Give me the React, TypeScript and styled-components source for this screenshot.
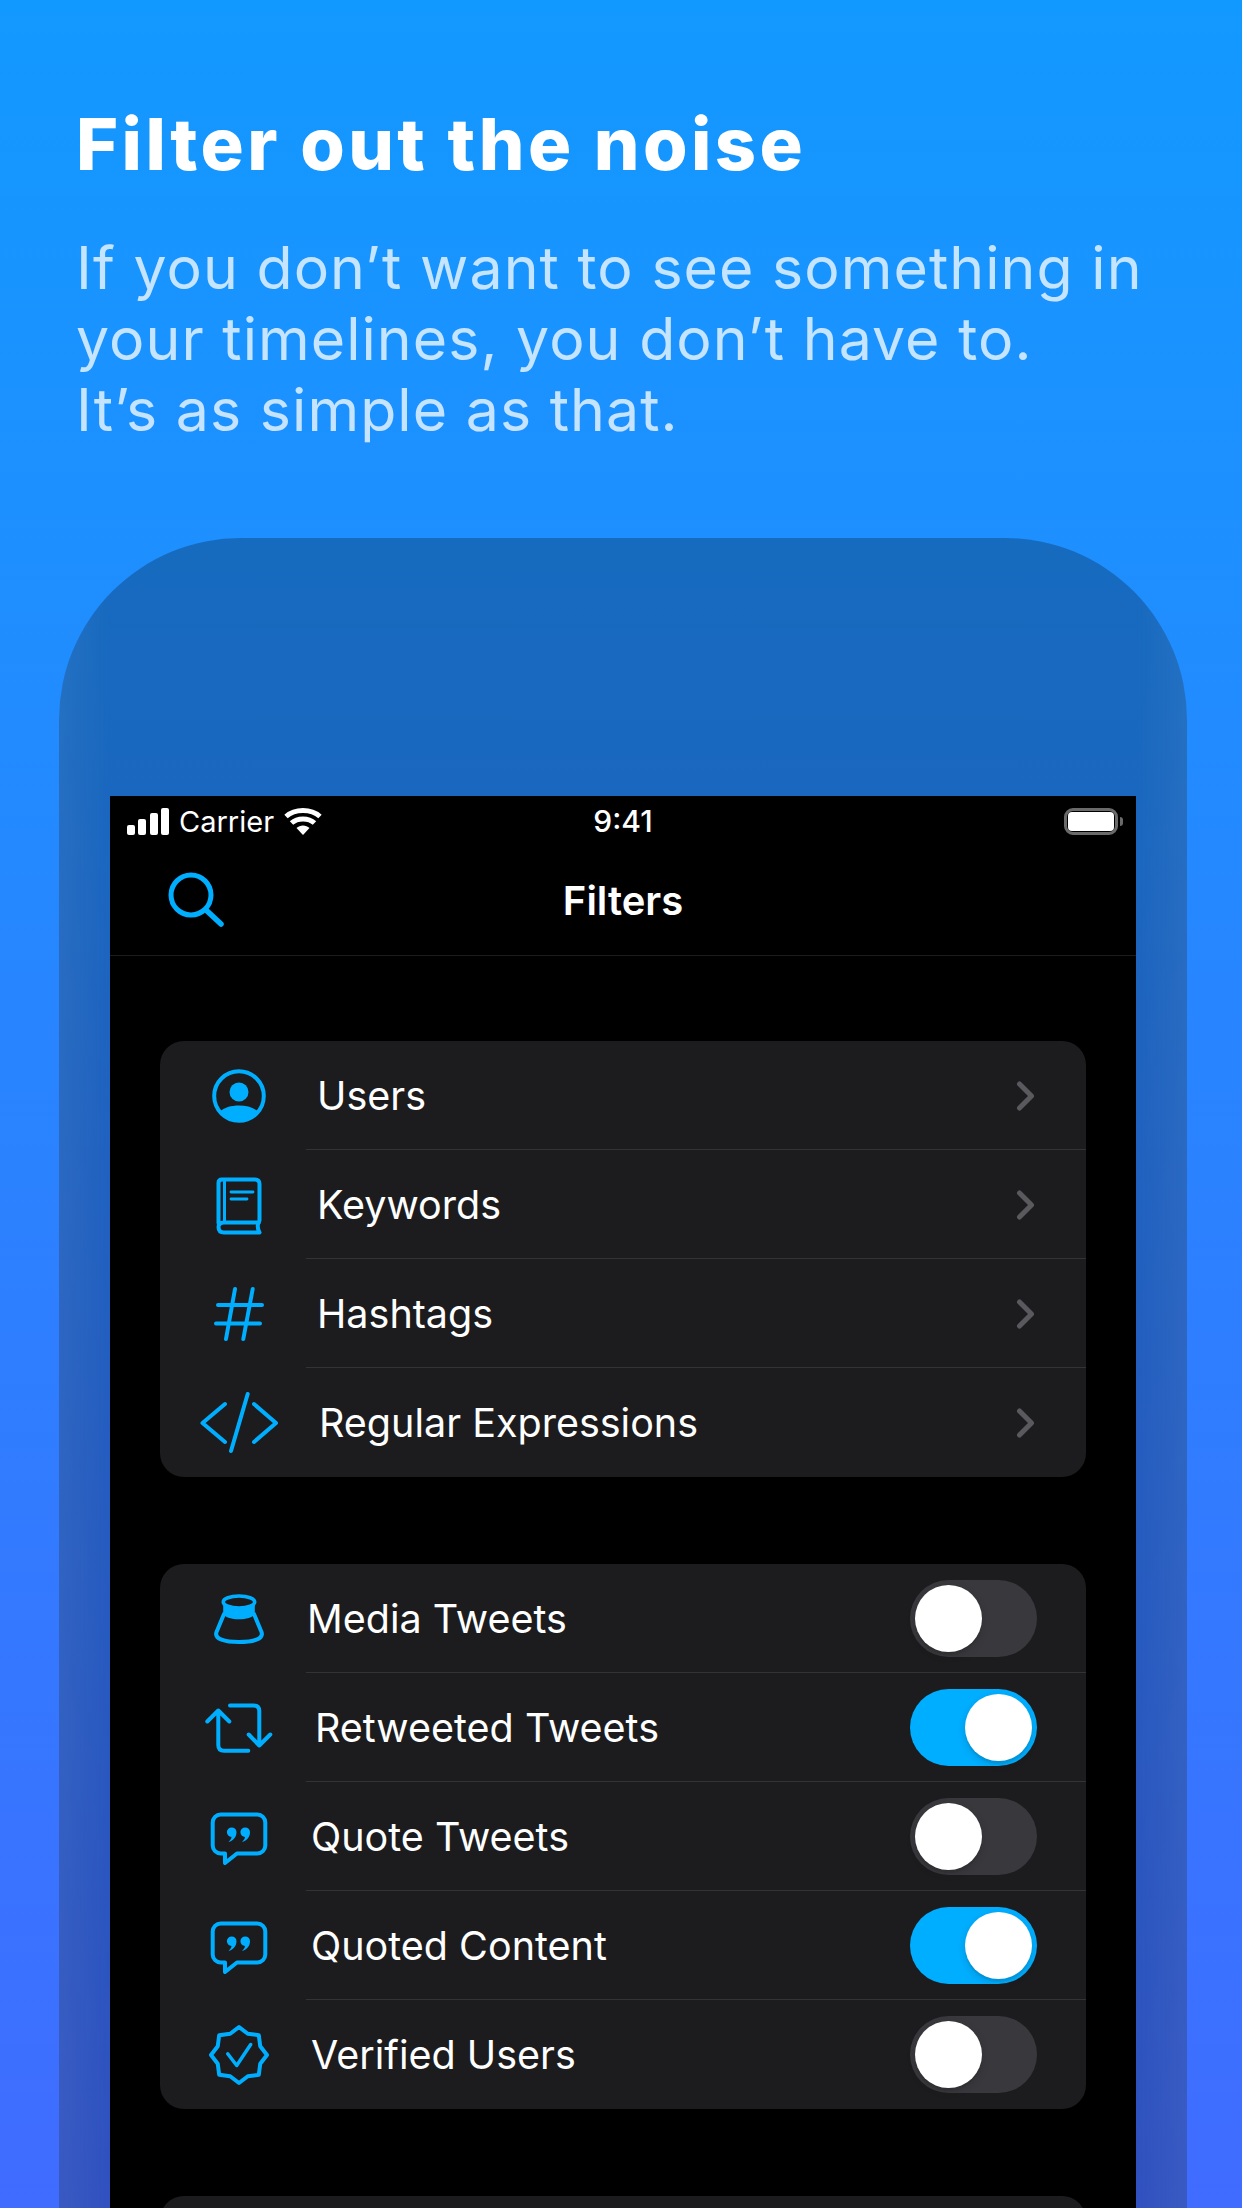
import styled, { createGlobalStyle } from 'styled-components';

const GlobalStyle = createGlobalStyle`
  html, body {
    margin: 0;
    padding: 0;
    background: #1499ff;
  }
`;

const Page = styled.div`
  width: 1242px;
  height: 2208px;
  overflow: hidden;
  box-sizing: border-box;
  padding-top: 104px;
  background: linear-gradient(180deg, #1299ff 0%, #1e8fff 25%, #406cff 100%);
  font-family: Inter, "Noto Sans", sans-serif;
`;

const Header = styled.header`
  padding-left: 76px;
`;

const Title = styled.h1`
  margin: 0;
  font-size: 72px;
  line-height: 80px;
  font-weight: 800;
  letter-spacing: 3.45px;
  color: #fff;
`;

const Subtitle = styled.p`
  margin: 48px 0 0;
  font-size: 59px;
  line-height: 71px;
  font-weight: 400;
  letter-spacing: 1.05px;
  color: rgba(255, 255, 255, 0.75);
`;

const Device = styled.section`
  width: 1128px;
  height: 1700px;
  margin: 93px 0 0 59px;
  box-sizing: border-box;
  padding: 258px 51px 0;
  border-radius: 182px 182px 0 0;
  background:
    linear-gradient(90deg, rgba(255, 255, 255, 0.05), rgba(255, 255, 255, 0) 50px, rgba(255, 255, 255, 0) 1078px, rgba(255, 255, 255, 0.05)),
    rgba(0, 0, 0, 0.25);
`;

const Screen = styled.div`
  background: #000;
  height: 1500px;
`;

const StatusBar = styled.div`
  height: 50px;
  padding: 0 13px 0 17px;
  display: grid;
  grid-template-columns: 1fr auto 1fr;
  align-items: center;
  color: #fff;
`;

const StatusLeft = styled.div`
  display: flex;
  align-items: center;
`;

const Carrier = styled.span`
  font-size: 29px;
  font-weight: 400;
  margin: 0 10px 0 9px;
`;

const Clock = styled.span`
  margin-right: 4px;
  font-size: 30px;
  font-weight: 500;
`;

const Battery = styled.div`
  justify-self: end;
  display: flex;
  align-items: center;
`;

const BatteryBody = styled.div`
  width: 48px;
  height: 21px;
  padding: 0;
  border: 3px solid #6a6a6a;
  border-radius: 9px;
  display: flex;
  box-sizing: content-box;
  &::before {
    content: '';
    flex: 1;
    margin: 1px;
    border-radius: 4px;
    background: #fff;
  }
`;

const BatteryCap = styled.div`
  width: 3px;
  height: 9px;
  margin-left: 2px;
  border-radius: 0 3px 3px 0;
  background: #6a6a6a;
`;

const NavBar = styled.div`
  position: relative;
  height: 109px;
  padding-left: 55px;
  display: flex;
  align-items: center;
  border-bottom: 1px solid #1c1c1e;
`;

const NavTitle = styled.div`
  position: absolute;
  left: 0;
  right: 0;
  text-align: center;
  font-size: 40px;
  font-weight: 600;
  color: #fff;
`;

const Content = styled.div`
  padding: 85px 50px 0;
  display: flex;
  flex-direction: column;
  gap: 87px;
`;

const Card = styled.div`
  background: #1c1c1e;
  border-radius: 24px;
  overflow: hidden;
`;

const Row = styled.div`
  position: relative;
  height: 109px;
  padding: 0 49px 0 39px;
  display: flex;
  align-items: center;
  &:not(:last-child)::after {
    content: '';
    position: absolute;
    left: 146px;
    right: 0;
    bottom: 0;
    height: 1px;
    background: #333335;
  }
`;

const IconBox = styled.svg`
  flex: none;
  width: 80px;
  height: 80px;
  color: #00aeff;
`;

const Label = styled.span<{ $indent: number }>`
  margin-left: ${(p) => p.$indent}px;
  padding-top: 1px;
  font-size: 39.5px;
  font-weight: 400;
  color: #fff;
  flex: 1;
`;

const Switch = styled.div<{ $on: boolean }>`
  width: 127px;
  height: 77px;
  padding: 5px;
  box-sizing: border-box;
  border-radius: 39px;
  display: flex;
  justify-content: ${(p) => (p.$on ? 'flex-end' : 'flex-start')};
  background: ${(p) => (p.$on ? '#00aeff' : '#39393d')};
  &::before {
    content: '';
    width: 67px;
    height: 67px;
    border-radius: 50%;
    background: #fff;
    box-shadow: 0 3px 8px rgba(0, 0, 0, 0.15), 0 3px 1px rgba(0, 0, 0, 0.06);
  }
`;

const Line = ({ d }: { d: string }) => (
  <path d={d} fill="none" stroke="currentColor" strokeWidth="4" strokeLinecap="round" strokeLinejoin="round" />
);

const Icon = ({ children }: { children: React.ReactNode }) => (
  <IconBox viewBox="0 0 80 80">{children}</IconBox>
);

const UserIcon = () => (
  <Icon>
    <circle cx="40" cy="40" r="24.8" fill="none" stroke="currentColor" strokeWidth="4" />
    <circle cx="40" cy="36" r="9.5" fill="currentColor" />
    <path d="M20.5 56 C25 51.5 32 49.5 40 49.5 C48 49.5 55 51.5 59.5 56 C54.5 62.5 47.5 66 40 66 C32.5 66 25.5 62.5 20.5 56Z" fill="currentColor" />
  </Icon>
);

const BookIcon = () => (
  <Icon>
    <Line d="M19.5 58 V18 Q19.5 14.5 23 14.5 H56 Q60.5 14.5 60.5 19 V55.5 Q57 61 60.5 67.5 H25 Q19.5 67.5 19.5 62 Q19.5 57.5 25 57.5 H60" />
    <path d="M25.5 15 V57" fill="none" stroke="currentColor" strokeWidth="3" />
    <path d="M32 27 H54 M32 34 H48" fill="none" stroke="currentColor" strokeWidth="2.8" strokeLinecap="round" />
  </Icon>
);

const HashIcon = () => (
  <Icon>
    <Line d="M19 31 H63 M17 49.5 H61 M36 15 L27 65 M53.7 15 L44.3 65" />
  </Icon>
);

const CodeIcon = () => (
  <Icon>
    <Line d="M26 21 L3.5 40 L26 59 M55 21 L77 40 L55 59 M48.7 11 L32 68" />
  </Icon>
);

const MediaIcon = () => (
  <Icon>
    <ellipse cx="40" cy="23" rx="15.8" ry="6" fill="none" stroke="currentColor" strokeWidth="3.5" />
    <path d="M24.2 23 V35 C28 42 52 42 55.8 35 V23 C52 30.5 28 30.5 24.2 23Z" fill="currentColor" />
    <Line d="M25 35 L17.5 53 C15 60 26 63 40 63 C54 63 65 60 62.5 53 L55 35" />
  </Icon>
);

const RetweetIcon = () => (
  <Icon>
    <Line d="M8.3 33.5 L19.3 22.5 L30.3 33.5 M19.3 22.5 V57 Q19.3 62.8 25 62.8 H49.3 M31 17.5 H54.5 Q60.3 17.5 60.3 23 V57.5 M49.7 46.5 L60.3 57.5 L71.3 46.5" />
  </Icon>
);

const commaPath = 'M37.5 35.2 C37.5 40 34 44 29.5 45 C31.5 43 32.5 41 32.5 40 A4.8 4.8 0 1 1 37.5 35.2Z';

const QuoteIcon = () => (
  <Icon>
    <Line d="M21.7 17.5 H58.3 A8 8 0 0 1 66.3 25.5 V48.5 A8 8 0 0 1 58.3 56.5 H38 L26 66 V56.5 H21.7 A8 8 0 0 1 13.7 48.5 V25.5 A8 8 0 0 1 21.7 17.5Z" />
    <path d={commaPath} fill="currentColor" />
    <path d={commaPath} fill="currentColor" transform="translate(13.5 0)" />
  </Icon>
);

// eight pointed badge, outer points on the axes and diagonals
const badgePoints = Array.from({ length: 16 }, (_, i) => {
  const angle = (i * Math.PI) / 8 - Math.PI / 2;
  const radius = i % 2 === 0 ? 28 : 23;
  return `${(40 + radius * Math.cos(angle)).toFixed(2)},${(40 + radius * Math.sin(angle)).toFixed(2)}`;
}).join(' ');

const BadgeIcon = () => (
  <Icon>
    <polygon points={badgePoints} fill="none" stroke="currentColor" strokeWidth="4" strokeLinejoin="round" />
    <path d="M28.7 38.8 L37.7 50.5 L51.7 29.5" fill="none" stroke="currentColor" strokeWidth="3.5" strokeLinecap="round" strokeLinejoin="round" />
  </Icon>
);

const Chevron = () => (
  <svg width="24" height="34" viewBox="0 0 24 34">
    <path d="M6.5 5 L18.5 17 L6.5 29" fill="none" stroke="#5a5a5e" strokeWidth="5" strokeLinecap="round" strokeLinejoin="round" />
  </svg>
);

const links = [
  { label: 'Users', indent: 38, icon: <UserIcon /> },
  { label: 'Keywords', indent: 38, icon: <BookIcon /> },
  { label: 'Hashtags', indent: 38, icon: <HashIcon /> },
  { label: 'Regular Expressions', indent: 40, icon: <CodeIcon /> },
];

const toggles = [
  { label: 'Media Tweets', indent: 28, on: false, icon: <MediaIcon /> },
  { label: 'Retweeted Tweets', indent: 36, on: true, icon: <RetweetIcon /> },
  { label: 'Quote Tweets', indent: 32, on: false, icon: <QuoteIcon /> },
  { label: 'Quoted Content', indent: 32, on: true, icon: <QuoteIcon /> },
  { label: 'Verified Users', indent: 32, on: false, icon: <BadgeIcon /> },
];

const App = () => (
  <Page>
    <GlobalStyle />
    <Header>
      <Title>Filter out the noise</Title>
      <Subtitle>
        If you don’t want to see something in<br />
        your timelines, you don’t have to.<br />
        It’s as simple as that.
      </Subtitle>
    </Header>

    <Device>
      <Screen>
        <StatusBar>
          <StatusLeft>
            <svg width="43" height="27" viewBox="0 0 43 27">
              <rect x="0" y="17" width="8" height="10" rx="2" fill="#fff" />
              <rect x="11" y="11" width="8" height="16" rx="2" fill="#fff" />
              <rect x="23" y="5" width="8" height="22" rx="2" fill="#fff" />
              <rect x="34" y="0" width="8" height="27" rx="2" fill="#fff" />
            </svg>
            <Carrier>Carrier</Carrier>
            <svg width="38" height="27" viewBox="0 0 38 27">
              <path d="M19 27 L12.5 20 C16 16.5 22 16.5 25.5 20Z" fill="#fff" />
              <path d="M7.5 15 C13.5 9.5 24.5 9.5 30.5 15" fill="none" stroke="#fff" strokeWidth="5" />
              <path d="M2 8.5 C11 0.5 27 0.5 36 8.5" fill="none" stroke="#fff" strokeWidth="5" />
            </svg>
          </StatusLeft>
          <Clock>9:41</Clock>
          <Battery>
            <BatteryBody />
            <BatteryCap />
          </Battery>
        </StatusBar>

        <NavBar>
          <svg width="62" height="62" viewBox="0 0 62 62">
            <circle cx="26" cy="25" r="20" fill="none" stroke="#00aeff" strokeWidth="5" />
            <path d="M41 40 L56 54" fill="none" stroke="#00aeff" strokeWidth="5.5" strokeLinecap="round" />
          </svg>
          <NavTitle>Filters</NavTitle>
        </NavBar>

        <Content>
          <Card>
            {links.map((item) => (
              <Row key={item.label}>
                {item.icon}
                <Label $indent={item.indent}>{item.label}</Label>
                <Chevron />
              </Row>
            ))}
          </Card>

          <Card>
            {toggles.map((item) => (
              <Row key={item.label}>
                {item.icon}
                <Label $indent={item.indent}>{item.label}</Label>
                <Switch $on={item.on} />
              </Row>
            ))}
          </Card>

          <Card>
            <Row />
          </Card>
        </Content>
      </Screen>
    </Device>
  </Page>
);

export default App;
